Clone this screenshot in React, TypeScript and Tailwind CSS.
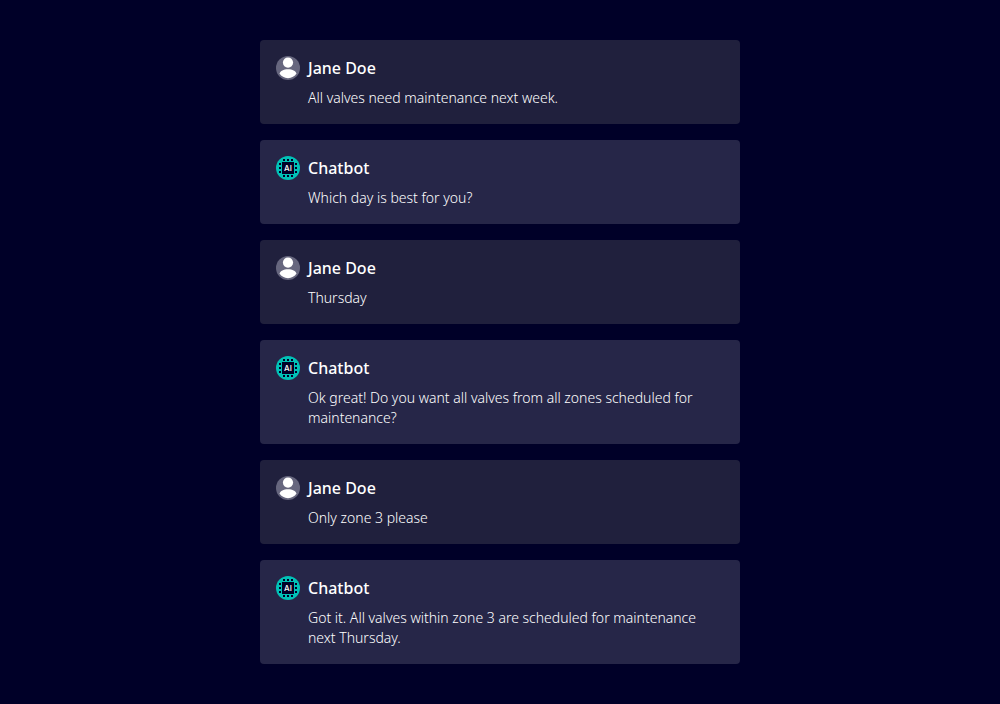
type Message = { author: 'user' | 'bot'; text: string };

const messages: Message[] = [
  { author: 'user', text: 'All valves need maintenance next week.' },
  { author: 'bot', text: 'Which day is best for you?' },
  { author: 'user', text: 'Thursday' },
  { author: 'bot', text: 'Ok great! Do you want all valves from all zones scheduled for maintenance?' },
  { author: 'user', text: 'Only zone 3 please' },
  { author: 'bot', text: 'Got it. All valves within zone 3 are scheduled for maintenance next Thursday.' },
];

function UserAvatar() {
  return (
    <svg viewBox="0 0 24 24" className="size-6 shrink-0" aria-hidden="true">
      <circle cx="12" cy="12" r="12" fill="#66667e" />
      <circle cx="12" cy="6.6" r="5.1" fill="#fff" />
      <path d="M12 13.2c-4.600 0-7.600 1.800-8.500 4.400C5.300 20.400 8.300 22.200 12 22.200s6.700-1.800 8.500-4.600C19.600 15 16.600 13.200 12 13.200z" fill="#fff" />
    </svg>
  );
}

const pins = [7, 11, 15];

function BotAvatar() {
  return (
    <svg viewBox="0 0 24 24" className="size-6 shrink-0" aria-hidden="true">
      <circle cx="12" cy="12" r="12" fill="#00c1b6" />
      <g fill="#000028">
        <rect x="6" y="6" width="12" height="12" />
        {pins.map((p) => (
          <g key={p}>
            <rect x={p} y="3" width="2" height="2" />
            <rect x={p} y="19" width="2" height="2" />
            <rect x="3" y={p} width="2" height="2" />
            <rect x="19" y={p} width="2" height="2" />
          </g>
        ))}
      </g>
      <text x="12" y="15" textAnchor="middle" fill="#fff" fontSize="8" fontWeight="500" fontFamily="Inter, sans-serif">
        AI
      </text>
    </svg>
  );
}

function MessageCard({ author, text }: Message) {
  const isUser = author === 'user';
  return (
    <li className={`rounded p-4 ${isUser ? 'bg-[#20203d]' : 'bg-[#262648]'}`}>
      <div className="flex items-center gap-2">
        {isUser ? <UserAvatar /> : <BotAvatar />}
        <h2 className="text-base leading-6 font-medium text-white">{isUser ? 'Jane Doe' : 'Chatbot'}</h2>
      </div>
      <p className="mt-2 pr-4 pl-8 text-sm leading-5 font-light text-white">{text}</p>
    </li>
  );
}

export default function App() {
  return (
    <main className="min-h-screen bg-[#000028] px-4 py-10 font-['Noto_Sans',sans-serif]">
      <ul className="mx-auto flex max-w-[480px] flex-col gap-4">
        {messages.map((message, i) => (
          <MessageCard key={i} {...message} />
        ))}
      </ul>
    </main>
  );
}
